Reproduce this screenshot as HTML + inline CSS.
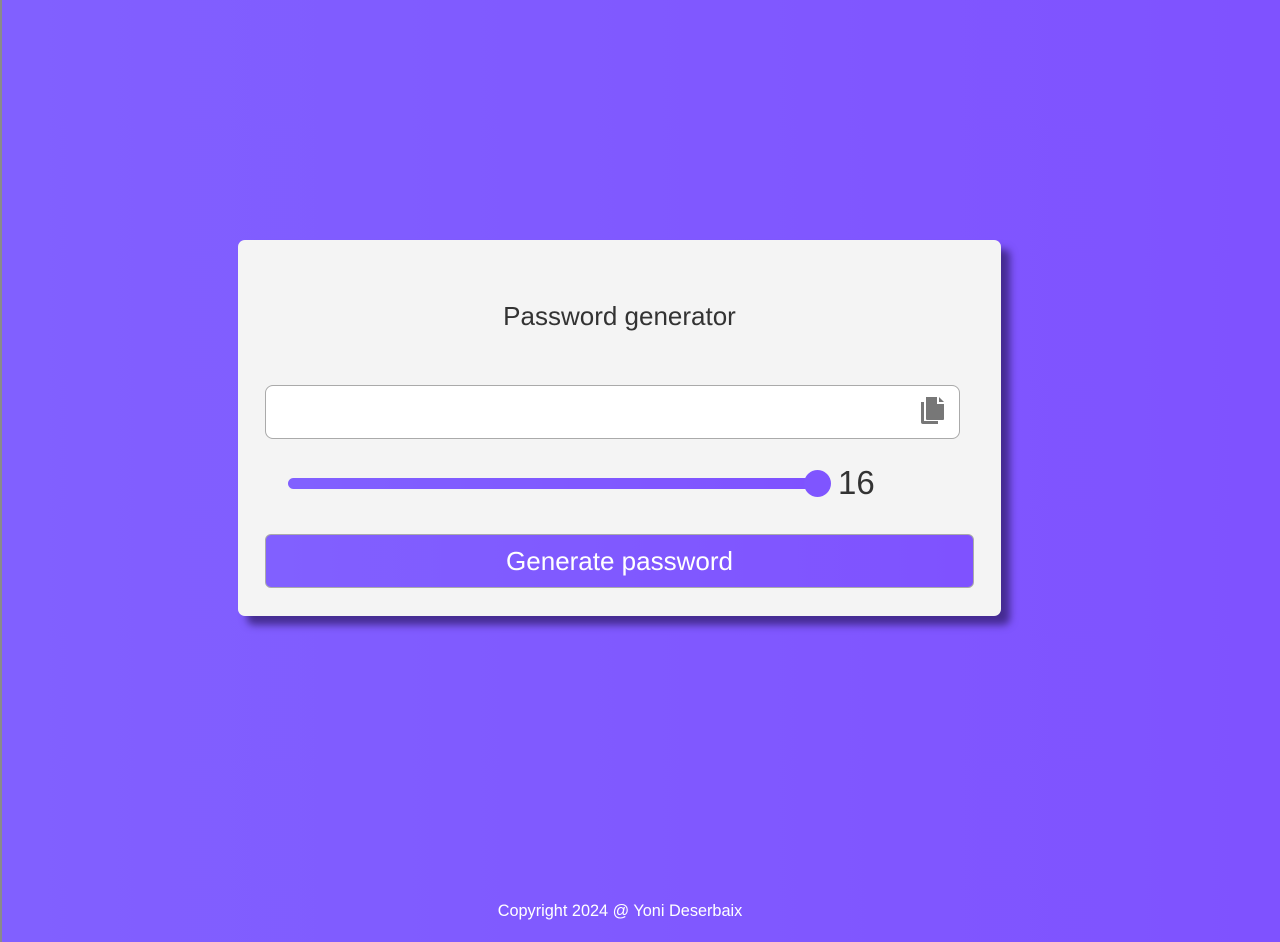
<!DOCTYPE html>
<html><head><style>
body{margin:0;width:1280px;height:942px;overflow:hidden;font-family:"Liberation Sans",Arial,sans-serif;background:linear-gradient(90deg,#8160ff,#7f52ff);position:relative}
.bl{position:absolute;left:0;top:0;width:2px;height:942px;background:#8a8a8a}
.card{position:absolute;left:238px;top:240px;width:763px;height:376px;background:#f4f4f4;border-radius:7px;box-shadow:9px 9px 8px rgba(50,30,110,.75)}
h1{position:absolute;left:0;right:0;top:61px;margin:0;text-align:center;font-weight:normal;font-size:26px;color:#333}
.inp{position:absolute;left:27px;top:145px;width:693px;height:52px;background:#fff;border:1px solid #aaa;border-radius:8px}
.track{position:absolute;left:50px;top:238px;width:530px;height:11px;border-radius:6px;background:linear-gradient(90deg,#8160ff,#7f52ff)}
.thumb{position:absolute;left:566px;top:230px;width:27px;height:27px;border-radius:50%;background:#7f55ff}
.num{position:absolute;left:600px;top:224px;font-size:33px;color:#333}
.btn{position:absolute;left:27px;top:294px;width:707px;height:52px;border:1px solid #aaa;border-radius:6px;background:linear-gradient(90deg,#8160ff,#7f52ff);color:#fff;font-size:26px;text-align:center;line-height:52px}
.foot{position:absolute;left:0;width:1240px;top:902px;text-align:center;color:#fff;font-size:16.3px}
</style></head><body>
<div class="bl"></div>
<div class="card">
<h1>Password generator</h1>
<div class="inp"><svg style="position:absolute;left:655px;top:11px" width="24" height="28" viewBox="0 0 24 28"><path d="M0 5h3v19h14v3H2q-2 0-2-2z" fill="#777"/><path d="M5 0h11v7h7v15q0 1-1 1H6q-1 0-1-1z" fill="#777"/><path d="M18 0l5 5h-5z" fill="#777"/></svg></div>
<div class="track"></div><div class="thumb"></div><div class="num">16</div>
<div class="btn">Generate password</div>
</div>
<div class="foot">Copyright 2024 @ Yoni Deserbaix</div>
</body></html>
